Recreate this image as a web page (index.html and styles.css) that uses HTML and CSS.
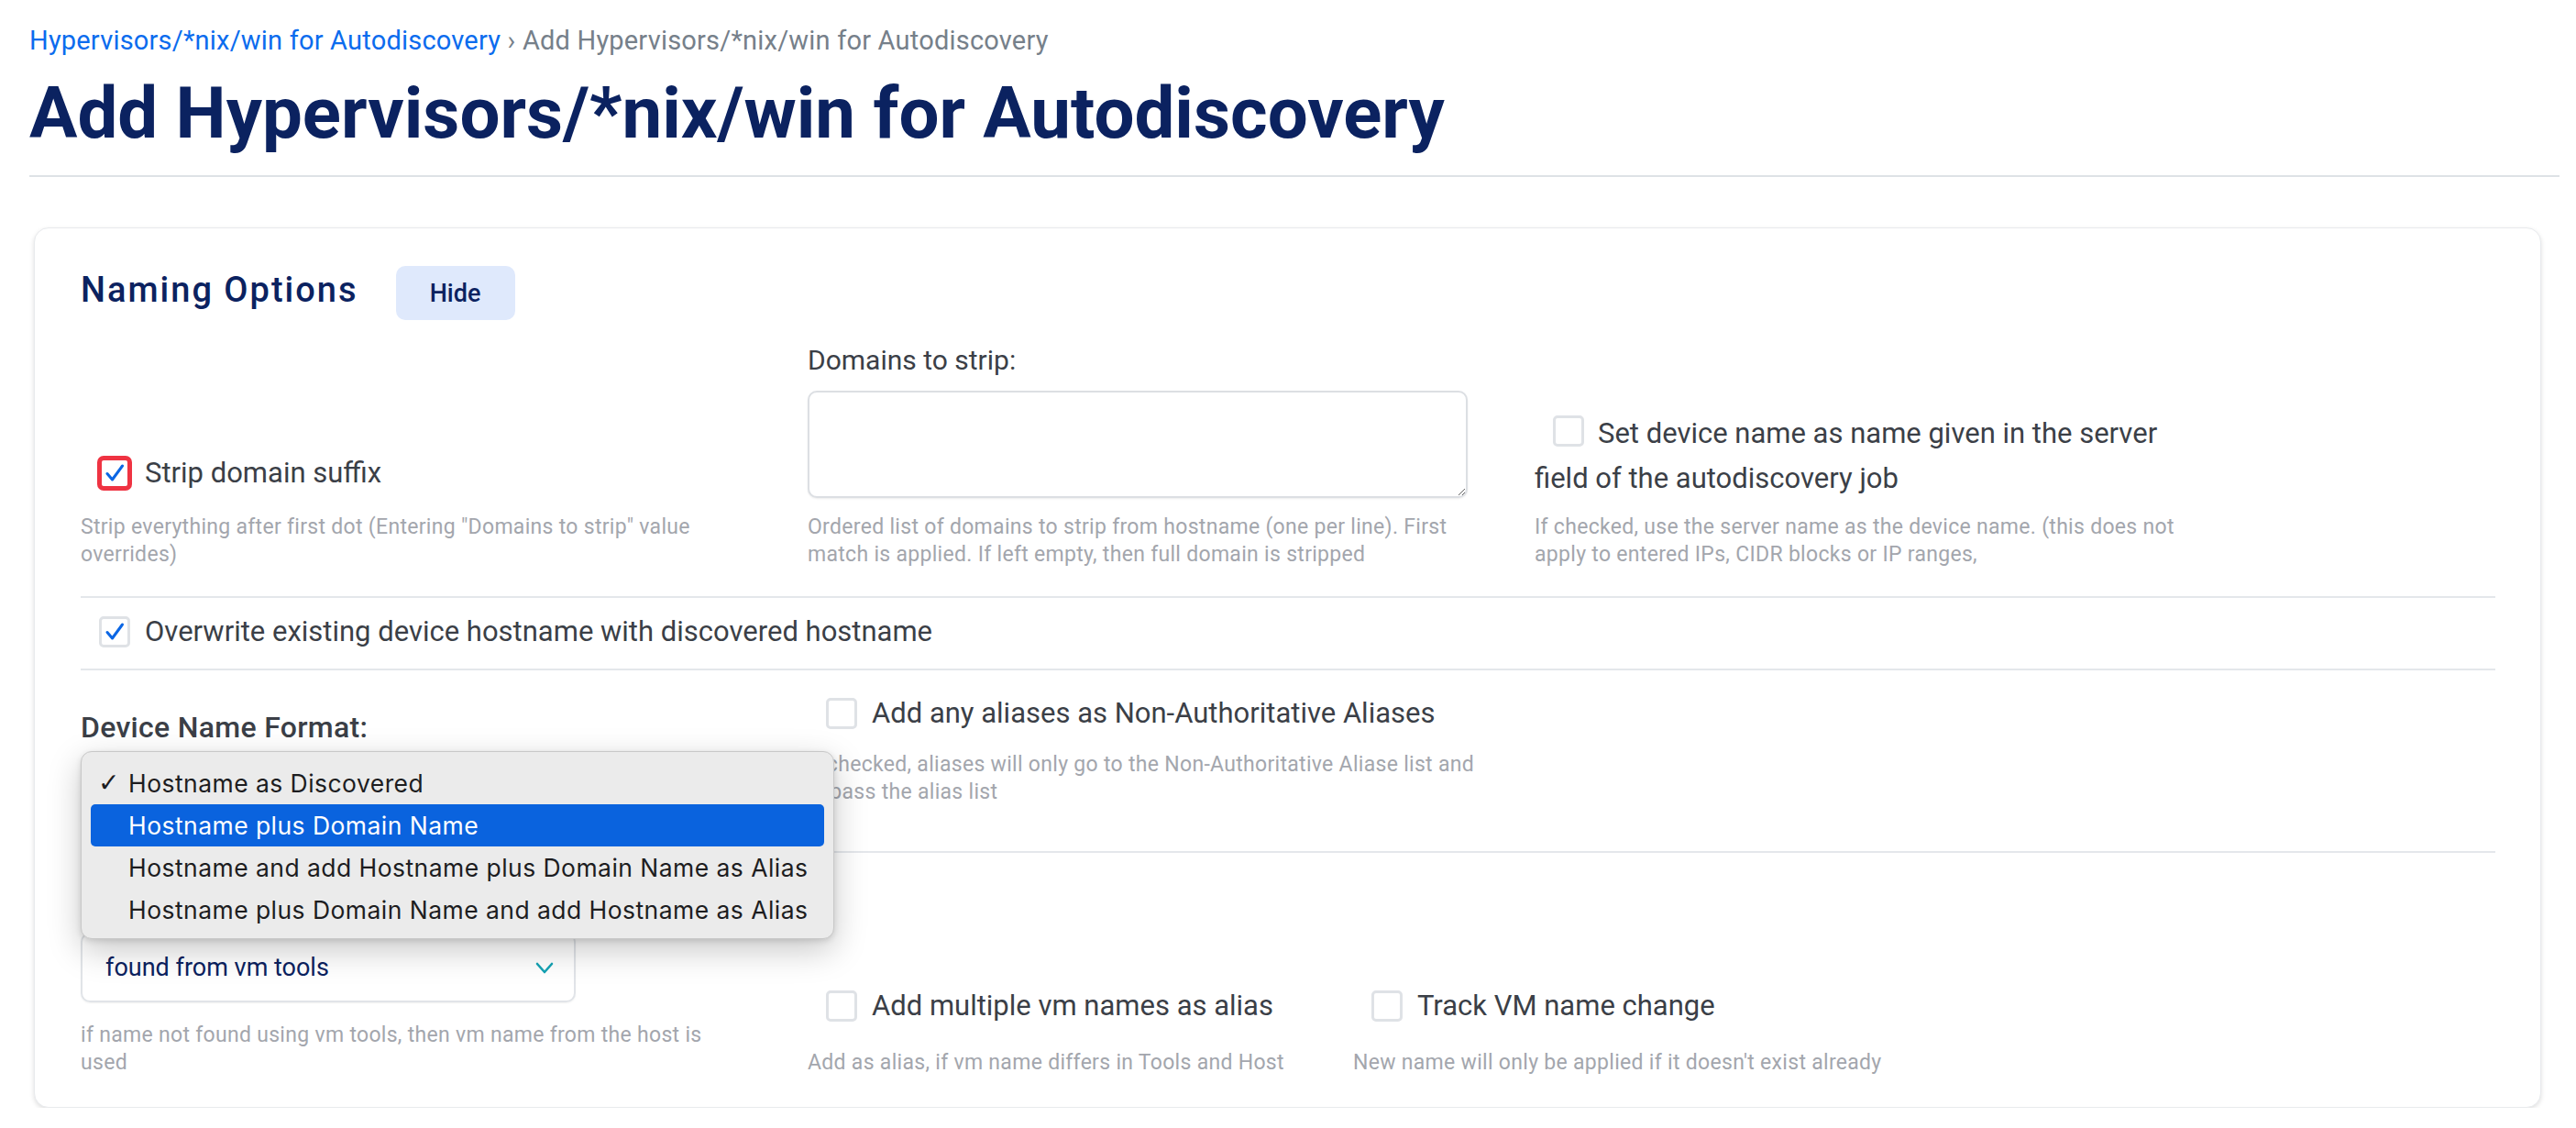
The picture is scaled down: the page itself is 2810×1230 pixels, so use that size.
FILE: index.html
```html
<!DOCTYPE html>
<html lang="en">
<head>
<meta charset="utf-8">
<title>Add Hypervisors/*nix/win for Autodiscovery</title>
<link rel="stylesheet" href="styles.css">
</head>
<body>
<div class="page">
  <nav class="crumbs"><a href="#" class="crumb-link">Hypervisors/*nix/win for Autodiscovery</a> <span class="crumb-sep">›</span> <span class="crumb-current">Add Hypervisors/*nix/win for Autodiscovery</span></nav>
  <h1 class="title">Add Hypervisors/*nix/win for Autodiscovery</h1>
  <hr class="title-rule">

  <section class="card">
    <div class="card-head">
      <h2 class="card-title">Naming Options</h2>
      <button class="btn-hide" type="button">Hide</button>
    </div>

    <div class="row row-top">
      <div class="col">
        <div class="check-line check-line-tall">
          <span class="cb cb-focus"><svg class="tick" viewBox="0 0 28 28"><path d="M6 14.5 L11.5 21 L22.5 6"/></svg></span>
          <span class="check-text">Strip domain suffix</span>
        </div>
        <p class="help help-col1">Strip everything after first dot (Entering "Domains to strip" value<br>overrides)</p>
      </div>
      <div class="col">
        <div class="field-label">Domains to strip:</div>
        <textarea class="textarea"></textarea>
        <p class="help help-col2">Ordered list of domains to strip from hostname (one per line). First<br>match is applied. If left empty, then full domain is stripped</p>
      </div>
      <div class="col">
        <div class="check-inline"><span class="cb cb-inline"></span>Set device name as name given in the server field of the autodiscovery job</div>
        <p class="help help-col3">If checked, use the server name as the device name. (this does not<br>apply to entered IPs, CIDR blocks or IP ranges,</p>
      </div>
    </div>

    <div class="row-check">
      <div class="check-line">
        <span class="cb"><svg class="tick" viewBox="0 0 28 28"><path d="M6 14.5 L11.5 21 L22.5 6"/></svg></span>
        <span class="check-text">Overwrite existing device hostname with discovered hostname</span>
      </div>
    </div>

    <div class="row row-mid">
      <div class="col col-format">
        <div class="field-label field-label-strong">Device Name Format:</div>
        <div class="select select-format"></div>
      </div>
      <div class="col col-alias">
        <div class="check-line">
          <span class="cb"></span>
          <span class="check-text">Add any aliases as Non-Authoritative Aliases</span>
        </div>
        <p class="help help-alias">If checked, aliases will only go to the Non-Authoritative Aliase list and<br>bypass the alias list</p>
      </div>
    </div>

    <div class="row row-bottom">
      <div class="col">
        <div class="select">
          <span class="select-value">found from vm tools</span>
          <svg class="chevron" viewBox="0 0 20 13"><path d="M2 2 L10 11 L18 2"/></svg>
        </div>
        <p class="help help-vm">if name not found using vm tools, then vm name from the host is<br>used</p>
      </div>
      <div class="col">
        <div class="check-line">
          <span class="cb"></span>
          <span class="check-text">Add multiple vm names as alias</span>
        </div>
        <p class="help help-small">Add as alias, if vm name differs in Tools and Host</p>
      </div>
      <div class="col">
        <div class="check-line">
          <span class="cb"></span>
          <span class="check-text">Track VM name change</span>
        </div>
        <p class="help help-small">New name will only be applied if it doesn't exist already</p>
      </div>
    </div>

    <div class="popup" role="listbox">
      <div class="popup-item"><span class="popup-check">✓</span>Hostname as Discovered</div>
      <div class="popup-item popup-item-active">Hostname plus Domain Name</div>
      <div class="popup-item">Hostname and add Hostname plus Domain Name as Alias</div>
      <div class="popup-item">Hostname plus Domain Name and add Hostname as Alias</div>
    </div>
  </section>
</div>
</body>
</html>
```

FILE: styles.css
```css
* { box-sizing: border-box; }

html, body {
  margin: 0;
  background: #ffffff;
}

body {
  font-family: Roboto, "Noto Sans", "Liberation Sans", sans-serif;
  color: #3b3f47;
}

.page {
  padding: 24px 18px 0 32px;
}

/* breadcrumb */
.crumbs {
  font-size: 29px;
  letter-spacing: 0.2px;
  line-height: 40px;
  height: 40px;
  color: #76808a;
  white-space: nowrap;
}
.crumb-link {
  color: #0b6cee;
  text-decoration: none;
}

/* title */
.title {
  margin: 14px 0 0;
  font-size: 78px;
  line-height: 92px;
  font-weight: 700;
  color: #0b2260;
  white-space: nowrap;
}

.title-rule {
  margin: 21px 0 0;
  border: 0;
  height: 2px;
  background: #dee2e6;
}

/* card */
.card {
  position: relative;
  margin: 55px 20px 0 5px;
  border: 1px solid #e8eaed;
  border-radius: 16px;
  box-shadow: 0 2px 5px rgba(0, 0, 0, 0.13);
  padding: 41px 49px 33px 50px;
  background: #fff;
}

.card-head {
  display: flex;
  align-items: baseline;
}

.card-title {
  margin: 0 41px 0 0;
  font-size: 38px;
  line-height: 46px;
  font-weight: 500;
  letter-spacing: 2px;
  color: #0b2260;
}

.btn-hide {
  display: inline-flex;
  align-items: center;
  justify-content: center;
  width: 130px;
  height: 59px;
  border: 0;
  border-radius: 10px;
  background: #dfe9fc;
  color: #0b2260;
  font-family: inherit;
  font-size: 27px;
  font-weight: 500;
  padding: 0;
}

/* rows */
.row {
  display: grid;
  grid-template-columns: 720px 720px 720px;
  column-gap: 73px;
}

.row-top {
  align-items: end;
  padding: 26px 0 30px;
  border-bottom: 2px solid #e4e7eb;
}

.row-check {
  padding: 20px 0 23px;
  border-bottom: 2px solid #e4e7eb;
}

.row-mid {
  align-items: start;
  padding: 28px 0 27px;
  border-bottom: 2px solid #e4e7eb;
}

.col-format {
  padding-top: 16px;
}

.col-alias {
  padding-top: 2px;
}

.row-bottom {
  grid-template-columns: 720px 522px 720px;
  align-items: end;
  padding-top: 87px;
}

/* text */
.field-label {
  font-size: 30px;
  line-height: 36px;
  color: #3b3f47;
}

.field-label-strong {
  font-size: 32px;
  font-weight: 500;
  letter-spacing: 0.3px;
}

.help {
  margin: 0;
  font-size: 23px;
  letter-spacing: 0.3px;
  line-height: 30px;
  color: #a3a6ad;
  white-space: nowrap;
}

.help-col1 { margin-top: 25px; }
.help-col2 { margin-top: 17px; }
.help-col3 { margin-top: 14px; }
.help-alias { margin-top: 24px; }
.help-vm { margin-top: 21px; }
.help-small { margin-top: 30px; }

/* checkboxes */
.check-line {
  display: flex;
  align-items: center;
  height: 34px;
}

.check-line-tall {
  height: 38px;
}

.check-text {
  font-size: 31px;
  line-height: 36px;
  color: #3b3f47;
  white-space: nowrap;
}

.cb {
  display: inline-block;
  flex: none;
  width: 34px;
  height: 34px;
  margin: 0 16px 0 20px;
  border: 3px solid #dfe2e6;
  border-radius: 5px;
  background: #fff;
}

.cb-focus {
  border-color: #ef3342;
  box-shadow: 0 0 0 2px #ef3342;
}

.tick {
  display: block;
  width: 28px;
  height: 28px;
}
.tick path {
  fill: none;
  stroke: #0b66e4;
  stroke-width: 3;
  stroke-linecap: round;
  stroke-linejoin: round;
}

.check-inline {
  font-size: 31px;
  line-height: 49px;
  color: #3b3f47;
}

.cb-inline {
  vertical-align: -4px;
  margin-right: 15px;
}

/* textarea */
.textarea {
  display: block;
  width: 720px;
  height: 117px;
  margin-top: 15px;
  border: 2px solid #dcdfe3;
  border-radius: 10px;
  box-shadow: 0 1px 2px rgba(0, 0, 0, 0.08);
  resize: both;
  font-family: inherit;
  font-size: 24px;
}

/* select */
.select {
  display: flex;
  align-items: center;
  justify-content: space-between;
  width: 540px;
  height: 76px;
  padding: 0 22px 0 25px;
  border: 2px solid #e1e4e8;
  border-radius: 10px;
  box-shadow: 0 1px 2px rgba(0, 0, 0, 0.06);
  font-size: 27px;
  color: #0b2260;
}

.select-format {
  margin-top: 14px;
}

.chevron {
  width: 20px;
  height: 13px;
}
.chevron path {
  fill: none;
  stroke: #14a3b4;
  stroke-width: 2.6;
  stroke-linecap: round;
  stroke-linejoin: round;
}

/* native-like popup menu */
.popup {
  position: absolute;
  left: 50px;
  top: 570px;
  width: 822px;
  height: 205px;
  padding: 11px 10px 10px;
  background: #ebebeb;
  border: 1px solid #c8c8c8;
  border-radius: 12px;
  box-shadow: 0 12px 36px rgba(0, 0, 0, 0.22), 0 2px 6px rgba(0, 0, 0, 0.12);
  font-family: Inter, "Noto Sans", sans-serif;
  font-size: 26.5px;
  letter-spacing: 0.45px;
  color: #1d1d1f;
}

.popup-item {
  position: relative;
  height: 46px;
  line-height: 46px;
  padding-left: 41px;
  border-radius: 5px;
  white-space: nowrap;
}

.popup-item-active {
  background: #0a63de;
  color: #ffffff;
}

.popup-check {
  position: absolute;
  left: 8px;
  top: 0;
  font-family: "DejaVu Sans", sans-serif;
  font-weight: 700;
  font-size: 28px;
  letter-spacing: 0;
}
```
